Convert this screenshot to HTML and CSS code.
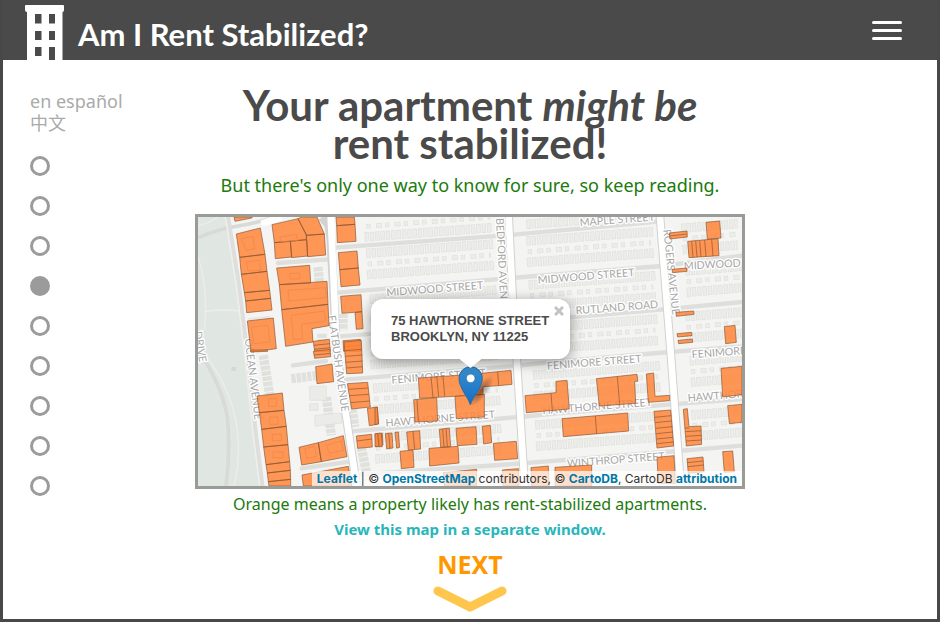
FILE: index.html
```html
<!DOCTYPE html>
<html lang="en">
<head>
<meta charset="utf-8">
<title>Am I Rent Stabilized?</title>
<meta name="viewport" content="width=device-width, initial-scale=1">
<link rel="stylesheet" href="styles.css">
</head>
<body>
<header class="site-header">
  <a class="brand" href="#">
    <svg class="brand-logo" viewBox="0 0 39 55" aria-hidden="true">
      <path fill="#fff" fill-rule="evenodd" d="M1 0H38Q39 0 39 1V5Q39 7 37.500 7V55H30V42H24V55H2V7Q0 7 0 5V1Q0 0 1 0ZM10 9V18.500H16.500V9ZM24 9V18.500H30V9ZM10 26V35H16.500V26ZM24 26V35H30V26ZM10 42V51H16.500V42Z"/>
    </svg>
    <span class="brand-name">Am I Rent Stabilized?</span>
  </a>
  <button class="menu-button" type="button" aria-label="Menu"><span></span><span></span><span></span></button>
</header>

<div class="layout">
  <aside class="sidebar">
    <nav class="languages" aria-label="Language">
      <a href="#">en español</a>
      <a href="#" lang="zh">中文</a>
    </nav>
    <nav class="steps" aria-label="Steps">
      <a href="#" aria-label="Step 1"></a>
      <a href="#" aria-label="Step 2"></a>
      <a href="#" aria-label="Step 3"></a>
      <a class="current" href="#" aria-label="Step 4" aria-current="step"></a>
      <a href="#" aria-label="Step 5"></a>
      <a href="#" aria-label="Step 6"></a>
      <a href="#" aria-label="Step 7"></a>
      <a href="#" aria-label="Step 8"></a>
      <a href="#" aria-label="Step 9"></a>
    </nav>
  </aside>

  <main class="slide">
    <h1>Your apartment <em>might be</em><br>rent stabilized!</h1>
    <p class="lead">But there's only one way to know for sure, so keep reading.</p>

    <div class="map">
      <svg class="map-tiles" viewBox="0 0 1632 807" role="img" aria-label="Map of rent-stabilized properties">
        <defs>
          <g id="lots">
            <path class="lot-edge" d="M0 0L380-28"/>
            <path class="lot-fill" d="M2 0L378-28"/>
          </g>
          <g id="yards">
            <path class="yard-edge" d="M0 0L370-27"/>
            <path class="yard-fill" d="M2 0L368-27"/>
          </g>
          <g id="block">
            <use href="#lots" y="34"/>
            <use href="#yards" x="4" y="66"/>
            <use href="#lots" x="2" y="98"/>
          </g>
          <g id="short-block">
            <path class="lot-edge" d="M0 34L170 20M4 98L170 84"/>
            <path class="lot-fill" d="M2 34L170 20M6 98L170 84"/>
            <path class="yard-edge" d="M4 66L165 52"/>
            <path class="yard-fill" d="M6 66L165 52"/>
          </g>
          <radialGradient id="shade"><stop offset="0" stop-color="#000" stop-opacity=".45"/><stop offset="1" stop-color="#000" stop-opacity="0"/></radialGradient>
          <linearGradient id="pin" x2="0" y2="1"><stop offset="0" stop-color="#3a8fce"/><stop offset="1" stop-color="#126fc6"/></linearGradient>
        </defs>

        <!-- parkland -->
        <path class="park" d="M0 0H84L104 130L141 400L166 600L190 807H0Z"/>
        <path class="path-line" d="M0 120Q30 200 20 330Q0 370 0 400M20 285Q60 275 126 282M0 390Q100 500 118 640Q128 730 108 807M60 0Q30 20 0 26"/>
        <path class="park-road" d="M0 62Q60 36 120 27T260-10"/>
        <path class="park-road" d="M0 400Q70 500 88 600Q98 700 84 807"/>
        <rect class="lawn-house" x="100" y="450" width="14" height="12"/>

        <!-- house lots -->
        <use href="#block" x="505" y="75"/><use href="#block" x="515" y="213"/><use href="#block" x="515" y="345"/>
        <use href="#block" x="525" y="480"/><use href="#block" x="530" y="628"/>
        <use href="#block" x="985" y="38"/><use href="#block" x="992" y="170"/><use href="#block" x="998" y="300"/>
        <use href="#block" x="1005" y="440"/><use href="#block" x="1012" y="590"/>
        <use href="#lots" x="500" y="60"/><use href="#yards" x="505" y="28"/><use href="#lots" x="985" y="22"/>
        <use href="#short-block" x="1450" y="0"/><use href="#short-block" x="1462" y="128"/><use href="#short-block" x="1462" y="265"/>
        <use href="#short-block" x="1475" y="398"/><use href="#short-block" x="1480" y="560"/>
        <path class="lot-edge" d="M360 150L364 195M435 290V340M372 350V378M196 415L216 540M385 540L400 655M460 560L470 630M490 690L510 790"/>
        <path class="building" d="M335 508H385V550H335ZM335 560H360V580H335ZM350 595L430 588L432 618L352 628ZM153 305L215 298L217 318L155 324Z"/>
        <path class="lot-edge" d="M280 485L370 474"/>

        <!-- side streets -->
        <path class="street" d="M411 92L921 55L1380 14M421 227L891 187L1391 147L1632 116M426 358L951 315L1396 277L1632 255M440 488L951 447L1071 434L1416 405L1632 388M461 643L961 600L1071 590L1421 562L1632 546M490 772L961 740L1441 702L1632 686M240 138L391 127M285 445L384 432M311 754L456 734"/>
        <path class="street" d="M90 0L122 200L151 440L172 640L193 807"/>
        <path class="street-edge" d="M82 0L114 200L143 440L164 640L185 807"/>

        <!-- avenues -->
        <path class="avenue-edge" d="M372 0L392 24L398 60L416 405L424 459L476 807M932 0L947 300L956 424L980 807M1386 0L1418 405L1448 807"/>
        <path class="avenue" d="M190 20L250 0M398 0L404 120L416 405L424 459L476 807M932 0L947 300L956 424L980 807M1386 0L1418 405L1448 807"/>

        <!-- street names -->
        <g class="street-name">
          <text transform="translate(566 238) rotate(-4.500)">MIDWOOD STREET</text>
          <text transform="translate(1020 200) rotate(-4.500)">MIDWOOD STREET</text>
          <text transform="translate(1458 158) rotate(-3)">MIDWOOD STREET</text>
          <text transform="translate(1146 28) rotate(-4.500)">MAPLE STREET</text>
          <text transform="translate(1134 292) rotate(-4.500)">RUTLAND ROAD</text>
          <text transform="translate(581 500) rotate(-4.500)">FENIMORE STREET</text>
          <text transform="translate(1048 458) rotate(-4.500)">FENIMORE STREET</text>
          <text transform="translate(1482 424) rotate(-4.500)">FENIMORE STREET</text>
          <text transform="translate(563 629) rotate(-4.500)">HAWTHORNE STREET</text>
          <text transform="translate(1034 592) rotate(-4.500)">HAWTHORNE STREET</text>
          <text transform="translate(1470 554) rotate(-4.500)">HAWTHORNE STREET</text>
          <text transform="translate(1108 751) rotate(-4.500)">WINTHROP STREET</text>
          <text transform="translate(894 4) rotate(87)">BEDFORD AVENUE</text>
          <text transform="translate(1396 38) rotate(84)">ROGERS AVENUE</text>
          <text transform="translate(390 296) rotate(82)">FLATBUSH AVENUE</text>
          <text transform="translate(140 366) rotate(83)">OCEAN AVENUE</text>
          <text transform="translate(-12 345) rotate(80)">DRIVE</text>
        </g>

        <!-- rent-stabilized properties -->
        <g class="property">
          <g transform="translate(-9 -15)">
            <path d="M117 15H172L170 18L120 28ZM124 66L196 48L210 127L134 136ZM134 136L210 127L216 178L139 187ZM139 187L216 178L224 235L148 242ZM148 242L224 235L227 259L152 267ZM152 267L227 259L231 294L155 302ZM157 327L235 318L244 410L168 420Z"/>
            <path d="M231 38L309 20L334 67V83L238 92ZM309 20L320 15H366L388 66L334 70ZM334 70L388 66L392 129L338 134ZM238 92L286 88L290 135L241 140ZM286 88L335 83L338 132L290 137ZM245 168L344 160L347 213L253 218ZM253 218L396 208L399 277L260 293ZM260 293L399 277L402 341L351 350L354 390L272 403Z"/>
            <path d="M423 15H478L480 37L425 41ZM425 41L480 37L483 88L427 92ZM430 122L486 117L490 168L434 173ZM434 173L490 168L495 219L438 224ZM437 253L498 248L501 299L441 304ZM480 302L501 299L504 350L484 352ZM444 386L496 382L498 418H446ZM355 388L403 382L406 418H359Z"/>
            <path d="M356 400L405 395M357 412L406 407M446 405L497 400"/>
          </g>
          <g transform="translate(-9 399)">
            <path d="M166 0H217L218 4L168 6ZM355 4L405-2L407 20L359 25ZM362 50L411 42L416 95L366 101ZM447-24L499-29L503 69L455 71Z"/>
            <path d="M449 2L501-2M451 19L502 15M452 37L503 33M454 54L503 50M357 15L407 10"/>
            <path d="M186 138L262 129L267 181L193 188ZM193 188L267 181L274 229L200 238ZM200 238L274 229L279 284L206 291ZM206 291L279 284L284 335L213 344ZM213 344L284 335L286 361L217 369ZM217 369L286 361L287 388L220 395ZM220 395L287 388V408H222Z"/>
            <path d="M312 292L370 278L379 335L320 345ZM370 278L445 257L456 320L379 335ZM321 375L460 349L470 408H325Z"/>
            <path d="M457 101L518 97L526 171L470 177ZM460 118L520 114M463 137L522 133M466 158L524 153M517 175L547 171L551 222L523 227ZM484 258L530 253L532 291L488 295ZM485 273L531 267M540 253L562 250L564 285L543 290ZM551 252L555 287"/>
          </g>
          <g transform="translate(531 399)">
            <path d="M130 84L250 76L320 70L368 65L408 61L411 103L371 107L324 110V133L240 139L134 145ZM168 80L174 142M185 79L191 140M204 78L209 139M368 65L371 107"/>
            <path d="M116 149L185 143L188 213L120 216ZM126 148L130 215M240 139L328 133V201L244 206ZM0 173L7 172L10 221L0 224Z"/>
            <path d="M0 251L19 249L22 290H0ZM8 251L12 290M31 251L51 249L54 294L35 296ZM41 250L45 295M60 247L70 246L74 292L65 294ZM95 246L134 242L137 297L100 300ZM114 244L119 298M193 238L223 234L227 290L197 292ZM203 237L207 291M213 236L217 290M243 235L303 230L306 283L247 287ZM322 229L346 226L350 278L326 282ZM75 304L114 300L117 352L79 356ZM162 295L249 289L252 339L164 348ZM355 280L424 274L428 326L359 331Z"/>
            <path d="M205 368L305 358V408H208ZM382 360L430 356L432 408H384ZM468 353L520 348L522 408H470Z"/>
          </g>
          <g transform="translate(1071 -15)">
            <path d="M343 63L396 57L397 75L345 81ZM344 72L396 66M453 31L494 27L498 78L457 82ZM398 88L489 80L492 131L402 137ZM410 87L414 136M422 86L426 135M434 85L438 134M449 84L453 133M470 82L474 132M351 172L396 168V178L353 182ZM363 301L416 297L417 307L364 313ZM366 365L410 361L411 371L368 375ZM369 385L412 381L413 391L371 395ZM508 344L540 340L544 391L512 395Z"/>
          </g>
          <g transform="translate(1071 399)">
            <path d="M-90 137L3 128V94L36 91L43 177L-86 188ZM-12 129L-8 182M124 86L246 73L248 94H239L242 160L133 168ZM187 79L194 164M274 72L296 69L300 139L344 136V152L280 157Z"/>
            <path d="M21 206L218 189L221 243L25 260ZM121 198L125 252M297 184L347 180L356 288L306 294ZM299 202L349 197M301 218L350 213M303 235L352 230M304 251L353 246M305 267L354 262M305 281L355 276"/>
            <path d="M385 178L397 176L402 230L438 228L440 283L394 288ZM390 234H402M391 245L439 242M392 259L439 256M393 273L440 270M498 55L561 49V134L503 141ZM518 167L561 163V217L523 221ZM306 322L357 317L361 400H310ZM396 326L444 321L447 365L400 370ZM397 338L445 333M398 350L446 345M503 305L533 303L538 365L508 367Z"/>
            <path d="M0 352L110 345V408H0Z"/>
          </g>
        </g>

        <!-- footprints on the larger properties -->
        <path class="footprint" d="M130 65L165 58L170 95L145 100ZM245 60L295 52L300 70L250 74ZM145 135L185 130L188 160L150 162ZM275 170L305 168V185L277 187ZM270 220L382 212L385 242L274 252ZM280 295L380 282L383 312L310 322L314 365L286 368ZM160 330L210 325L215 375L168 380ZM212 545H235V568H212ZM215 600H240V622H215ZM222 653L250 650V670L224 672ZM225 705H255V722H225ZM320 695L350 688L355 718L326 724ZM385 685L430 672L436 700L394 708Z"/>

        <!-- address marker -->
        <ellipse cx="849" cy="522" rx="20" ry="55" transform="rotate(38 849 522)" fill="url(#shade)"/>
        <path d="M817 563C810 540 783 513 783 484A35 35 0 0 1 853 484C853 513 824 540 817 563Z" fill="url(#pin)" stroke="#2a6ca4" stroke-width="3"/>
        <circle cx="818" cy="484" r="13" fill="#fff" stroke="#2e6c97" stroke-width="2"/>
      </svg>

      <div class="popup">
        <button class="popup-close" type="button" aria-label="Close"><svg viewBox="0 0 10 10" aria-hidden="true"><path d="M1 1L9 9M9 1L1 9"/></svg></button>
        <address>75 HAWTHORNE STREET<br>BROOKLYN, NY 11225</address>
      </div>
      <div class="attribution"><a href="#">Leaflet</a> | © <a href="#">OpenStreetMap</a> contributors, © <a href="#">CartoDB</a>, CartoDB <a href="#">attribution</a></div>
    </div>

    <p class="caption">Orange means a property likely has rent-stabilized apartments.</p>
    <a class="map-link" href="#">View this map in a separate window.</a>
    <a class="next" href="#">
      <span>NEXT</span>
      <svg viewBox="0 0 74 26" aria-hidden="true"><path d="M5 5L37 21L69 5" fill="none" stroke="#ffc64d" stroke-width="9" stroke-linecap="round" stroke-linejoin="round"/></svg>
    </a>
  </main>
</div>
</body>
</html>
```
FILE: styles.css
```css
* { box-sizing: border-box; }

body {
  margin: 0;
  min-height: 100vh;
  border: 3px solid #484848;
  border-top: 0;
  background: #fff;
  color: #4a4a4a;
  font-family: "Noto Sans", "Noto Sans CJK SC", sans-serif;
}

a { text-decoration: none; }

button {
  padding: 0;
  border: 0;
  background: none;
  cursor: pointer;
}

.site-header {
  display: flex;
  align-items: center;
  justify-content: space-between;
  height: 60px;
  padding: 0 35px 0 22px;
  background: #4a4a4a;
}

.brand {
  display: flex;
  align-self: stretch;
  align-items: flex-end;
  gap: 14px;
  color: #fff;
}

.brand-logo { width: 39px; height: 55px; }

.brand-name {
  padding-bottom: 8px;
  font: bold 31px/36px Lato, sans-serif;
}

.menu-button {
  display: flex;
  flex-direction: column;
  gap: 5px;
  width: 30px;
}

.menu-button span {
  height: 3px;
  border-radius: 2px;
  background: #fff;
}

.layout {
  display: grid;
  grid-template-columns: 1fr minmax(0, 550px) 1fr;
}

.sidebar { padding: 30px 0 0 27px; }

.languages {
  display: flex;
  flex-direction: column;
  font-size: 18px;
  line-height: 22px;
}

.languages a { color: #aaa; }

.steps {
  display: flex;
  flex-direction: column;
  gap: 20px;
  margin-top: 22px;
}

.steps a {
  width: 20px;
  height: 20px;
  border: 3px solid #9b9b9b;
  border-radius: 50%;
}

.steps .current { background: #9b9b9b; }

.slide {
  display: flex;
  flex-direction: column;
  align-items: center;
  padding-top: 26px;
  text-align: center;
}

h1 {
  margin: 0;
  font: bold 42px/38px Lato, sans-serif;
}

.lead {
  margin: 10px 0 16px;
  color: #207a0c;
  font-size: 18px;
  line-height: 26px;
}

.map {
  position: relative;
  width: 100%;
  border: 3px solid #999b99;
  background: #f4f4f2;
}

.map-tiles { display: block; width: 100%; }

.park { fill: #e0e6e2; }
.path-line { fill: none; stroke: #eceeec; stroke-width: 4; }
.park-road { fill: none; stroke: #d8dad8; stroke-width: 11; }
.lawn-house { fill: #d5d9d5; }
.street { fill: none; stroke: #dededc; stroke-width: 13; stroke-linecap: round; }
.street-edge { fill: none; stroke: #eeeeec; stroke-width: 5; }
.avenue-edge { fill: none; stroke: #d2d2d0; stroke-width: 26; }
.avenue { fill: none; stroke: #fff; stroke-width: 20; }
.lot-edge { fill: none; stroke: #e0e0dc; stroke-width: 28; stroke-dasharray: 13 3; }
.lot-fill { fill: none; stroke: #ececea; stroke-width: 24; stroke-dasharray: 9 7; }
.yard-edge { fill: none; stroke: #e0e0dc; stroke-width: 14; stroke-dasharray: 13 16 18 9; }
.yard-fill { fill: none; stroke: #ececea; stroke-width: 10; stroke-dasharray: 9 20 14 13; }
.building { fill: #ebebe7; stroke: #dededa; stroke-width: 2; }

.street-name {
  fill: #a6a6a6;
  stroke: #fff;
  stroke-width: 8;
  stroke-linejoin: round;
  paint-order: stroke;
  font: 32px Lato, sans-serif;
}

.property {
  fill: #ff853a;
  fill-opacity: .85;
  stroke: #8a5634;
  stroke-width: 2;
}

.footprint { fill: none; stroke: #ef8546; stroke-width: 2; }

.popup {
  position: absolute;
  bottom: 127px;
  left: 50%;
  width: 199px;
  margin-left: -99px;
  padding: 14px 20px;
  border-radius: 12px;
  background: #fff;
  box-shadow: 0 3px 14px rgba(0, 0, 0, .4);
  text-align: left;
}

.popup::after {
  content: "";
  position: absolute;
  top: 100%;
  left: 50%;
  width: 22px;
  height: 9px;
  margin-left: -11px;
  background: #fff;
  clip-path: polygon(0 0, 100% 0, 50% 100%);
}

.popup address {
  color: #4a4a4a;
  font: bold 13px/16px "Liberation Sans", sans-serif;
  white-space: nowrap;
}

.popup-close {
  position: absolute;
  top: 7px;
  right: 6px;
  width: 10px;
  height: 10px;
}

.popup-close svg {
  display: block;
  fill: none;
  stroke: #c3c3c3;
  stroke-width: 3;
}

.attribution {
  position: absolute;
  right: 0;
  bottom: 0;
  padding: 0 5px;
  background: rgba(255, 255, 255, .7);
  color: #333;
  font: 12px/15px Inter, sans-serif;
  white-space: nowrap;
}

.attribution a { color: #0078a8; font-weight: bold; }

.caption {
  margin: 4px 0 0;
  color: #207a0c;
  font-size: 16px;
  line-height: 22px;
}

.map-link {
  margin-top: 2px;
  color: #29b6b9;
  font-size: 15px;
  font-weight: bold;
  line-height: 24px;
}

.next {
  display: flex;
  flex-direction: column;
  align-items: center;
  margin-top: 7px;
  color: #ff9800;
  font-size: 25px;
  font-weight: bold;
  line-height: 32px;
}

.next svg { width: 74px; height: 26px; margin-top: 6px; }
```
